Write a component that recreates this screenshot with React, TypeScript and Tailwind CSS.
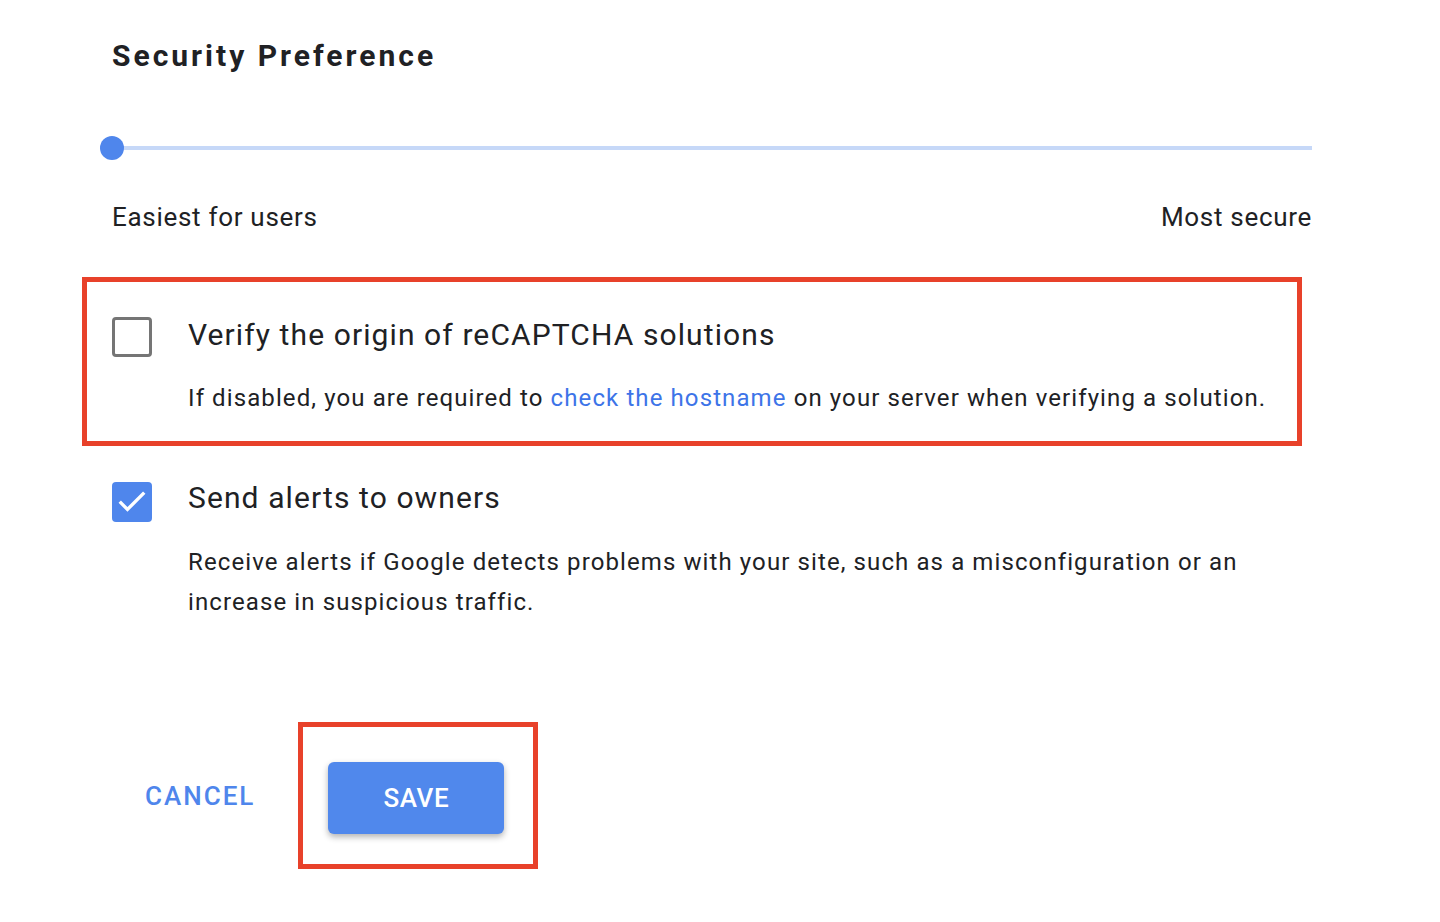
import React from "react";

const sans = { fontFamily: "Roboto, 'Noto Sans', Arial, sans-serif" };

function Checkbox({ checked }: { checked: boolean }) {
  if (checked) {
    return (
      <div className="flex h-[40px] w-[40px] shrink-0 items-center justify-center rounded-[4px] bg-[#4f86ec]">
        <svg width="34" height="34" viewBox="0 0 24 24" fill="none">
          <path d="M4.2 12.6l4.6 4.6L19.8 6.2" stroke="#ffffff" strokeWidth="2.4" strokeLinecap="square" />
        </svg>
      </div>
    );
  }
  return <div className="h-[40px] w-[40px] shrink-0 rounded-[4px] border-[3px] border-[#757575] bg-white" />;
}

export default function App() {
  return (
    <div className="min-h-[922px] w-[1440px] bg-white text-[#202124]" style={sans}>
      <div className="pl-[112px] pr-[128px] pt-[36px]">
        <h1 className="text-[30px] font-bold leading-[40px] tracking-[3px]">Security Preference</h1>

        {/* slider */}
        <div className="relative mt-[60px] h-[24px]">
          <div className="absolute left-0 right-0 top-[10px] h-[4px] bg-[#c6d8f8]" />
          <div className="absolute left-[-12px] top-0 h-[24px] w-[24px] rounded-full bg-[#4f86ec]" />
        </div>

        <div className="mt-[39px] flex justify-between text-[26px] leading-[36px] tracking-[0.7px]">
          <span>Easiest for users</span>
          <span>Most secure</span>
        </div>
      </div>

      <div className="ml-[82px] mt-[42px] w-[1220px] border-[5px] border-[#e8412a] pb-[27px] pl-[25px] pt-[35px]">
        <div className="flex gap-[36px]">
          <Checkbox checked={false} />
          <div>
            <div className="text-[30px] leading-[36px] tracking-[1.1px]">Verify the origin of reCAPTCHA solutions</div>
            <p className="mt-[29px] text-[24px] leading-[32px] tracking-[1.1px]">
              If disabled, you are required to <span className="text-[#3d74e8]">check the hostname</span> on your server when verifying a solution.
            </p>
          </div>
        </div>
      </div>

      <div className="ml-[112px] mt-[36px] flex gap-[36px]">
        <Checkbox checked={true} />
        <div>
          <div className="text-[30px] leading-[32px] tracking-[1.1px]">Send alerts to owners</div>
          <p className="mt-[28px] w-[1080px] text-[24px] leading-[40px] tracking-[1.1px]">
            Receive alerts if Google detects problems with your site, such as a misconfiguration or an increase in suspicious traffic.
          </p>
        </div>
      </div>

      <div className="ml-[145px] mt-[100px] flex items-center">
        <button className="text-[26px] font-medium leading-[36px] tracking-[2px] text-[#4f86ec]">CANCEL</button>
        <div className="ml-[43px] border-[5px] border-[#e8412a] pb-[30px] pl-[25px] pr-[29px] pt-[35px]">
          <button className="flex h-[72px] w-[176px] items-center justify-center rounded-[6px] bg-[#5088ec] text-[26px] font-medium tracking-[0.6px] text-white shadow-[0_3px_6px_rgba(0,0,0,0.3)]">
            SAVE
          </button>
        </div>
      </div>
    </div>
  );
}
